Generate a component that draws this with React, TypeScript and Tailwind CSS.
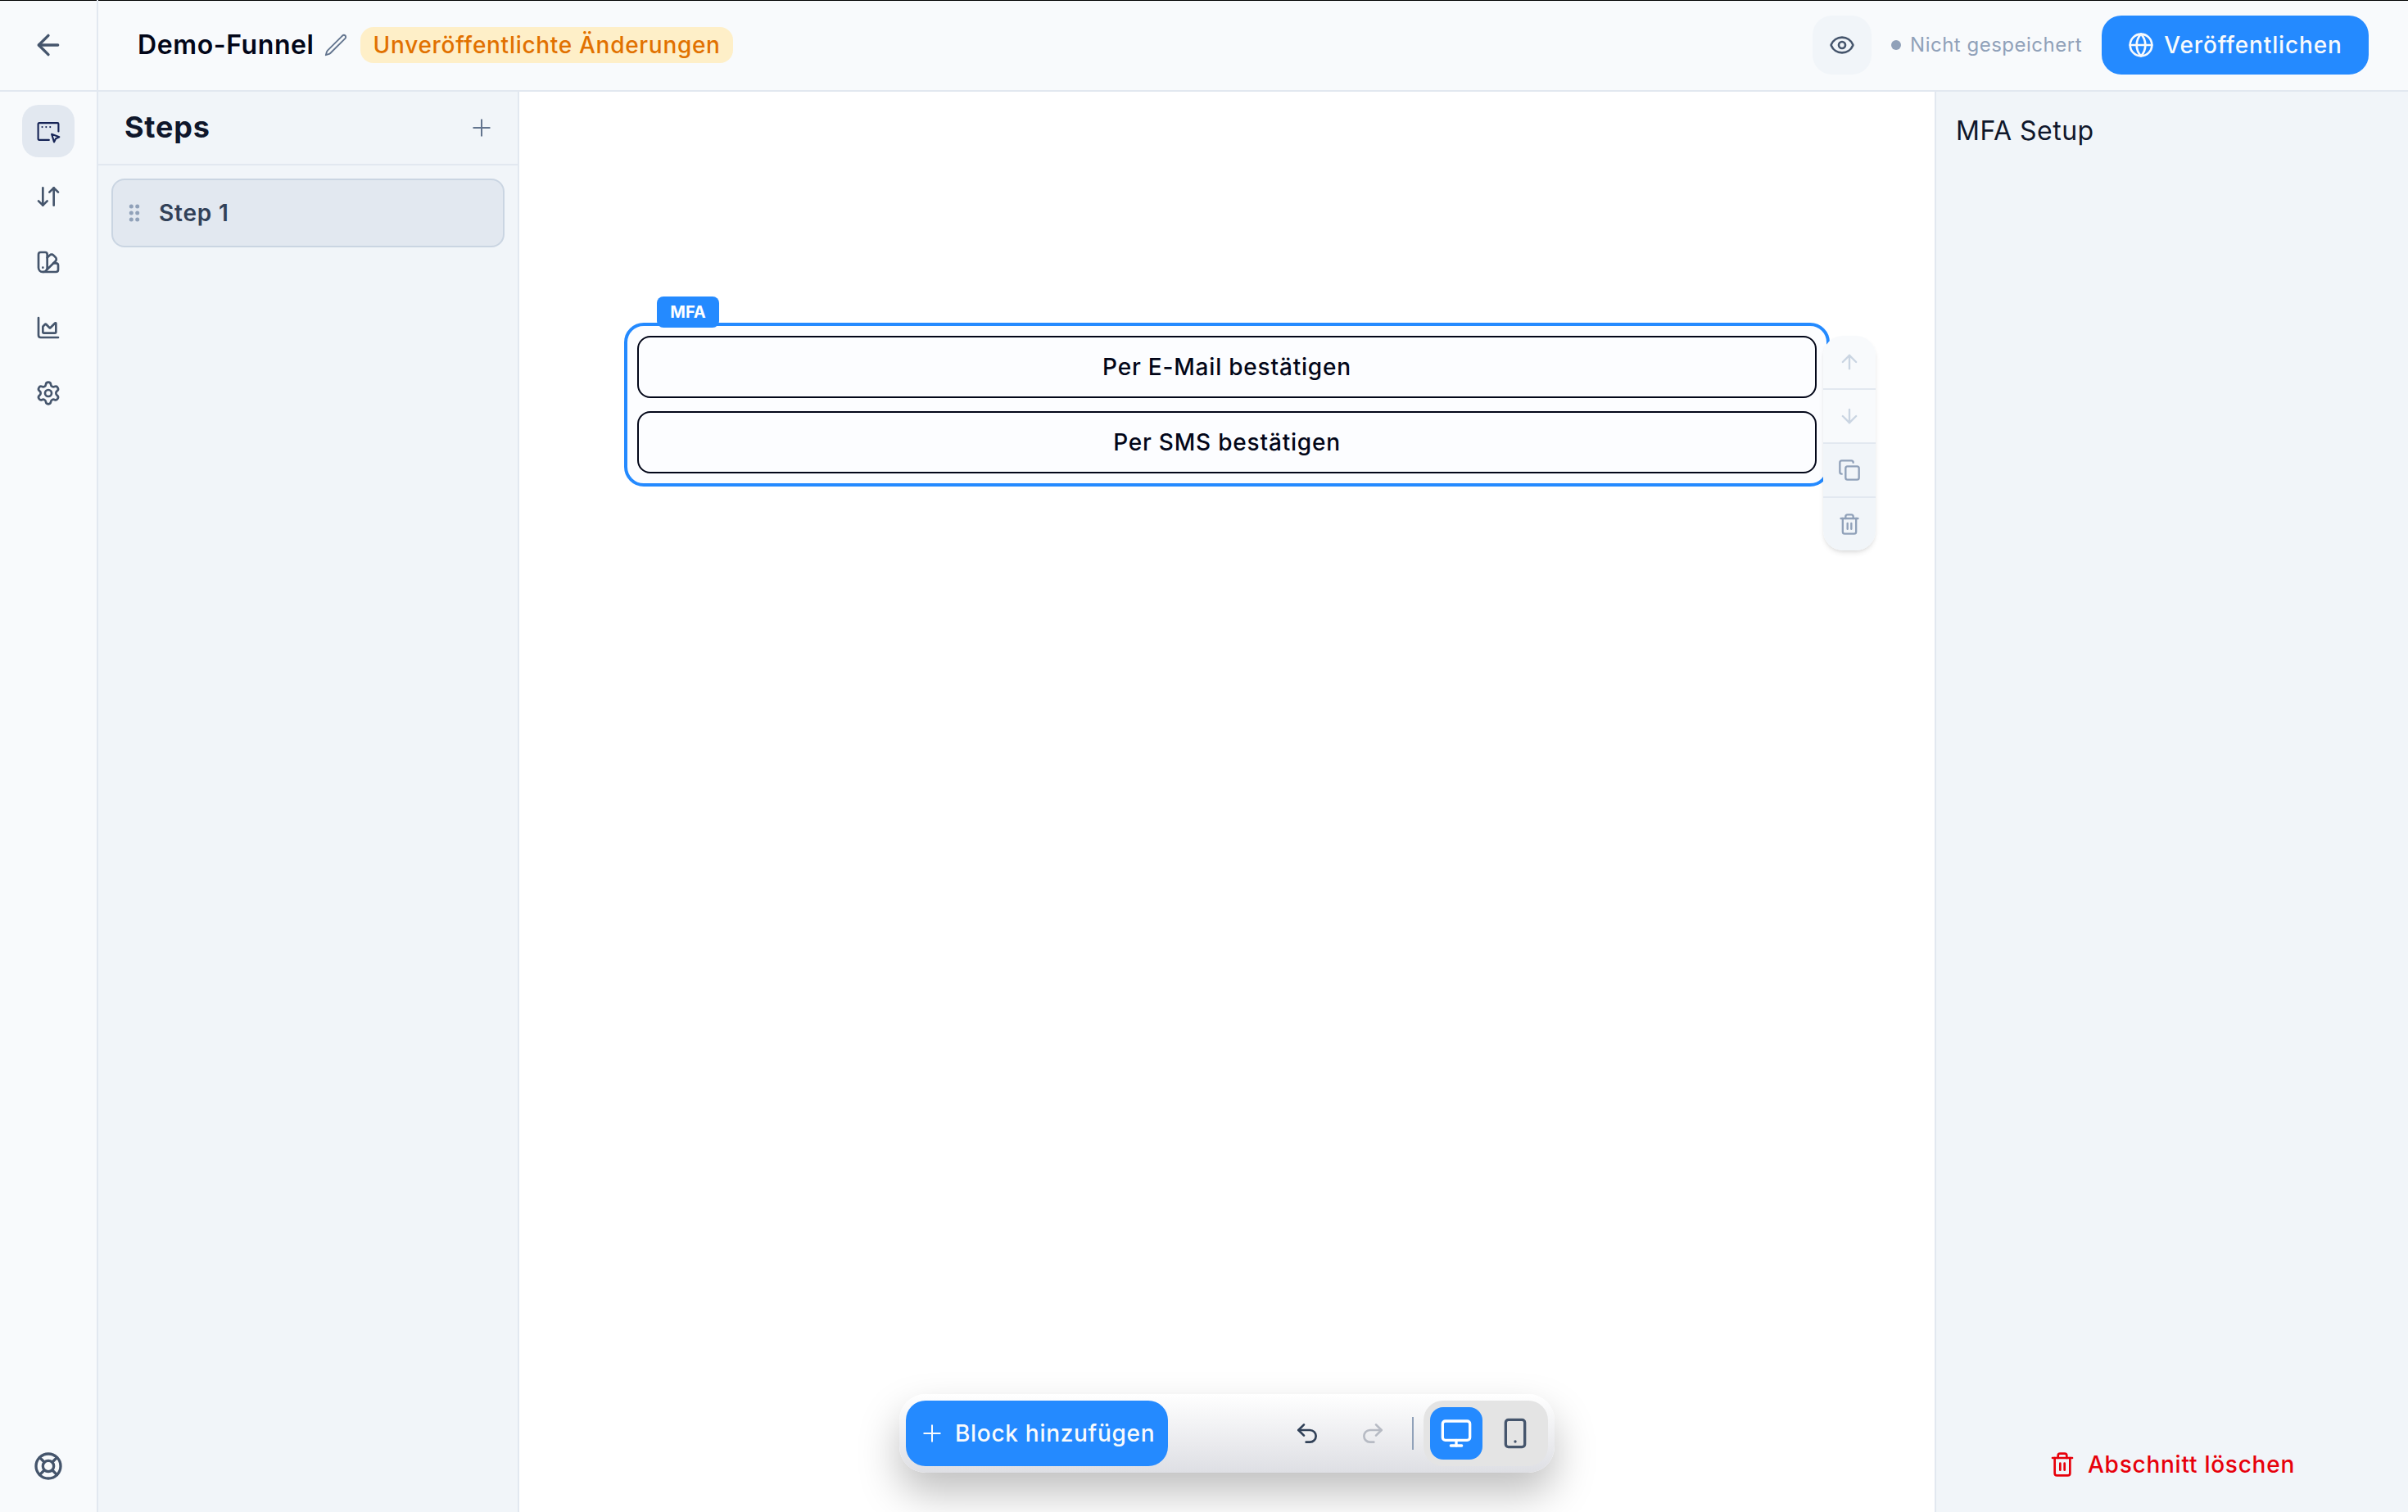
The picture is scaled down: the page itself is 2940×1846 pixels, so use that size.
import React from 'react';
import {
  ArrowDown,
  ArrowDownUp,
  ArrowLeft,
  ArrowUp,
  ChartArea,
  Copy,
  Eye,
  Globe,
  Monitor,
  Redo2,
  Settings,
  Smartphone,
  SwatchBook,
  Trash2,
  Undo2,
} from 'lucide-react';

interface IconProps {
  size?: number;
  stroke?: number;
  className?: string;
  children?: React.ReactNode;
}

const Icon = ({ size = 32, stroke = 1.5, className, children }: IconProps) => (
  <svg
    width={size}
    height={size}
    viewBox="0 0 24 24"
    fill="none"
    stroke="currentColor"
    strokeWidth={stroke}
    strokeLinecap="round"
    strokeLinejoin="round"
    className={className}
  >
    {children}
  </svg>
);

const PlusIcon = ({ className }: { className?: string }) => (
  <Icon className={className}>
    <path d="M12 4.700v14.600M4.700 12h14.600" />
  </Icon>
);

const navItems = [
  {
    name: 'editor',
    icon: (
      <Icon stroke={1.6}>
        <path d="M21.300 12.300V5.500a.9.9 0 0 0-.9-.9H3.600a.9.9 0 0 0-.9.9v13.800a.9.9 0 0 0 .9.900h9" />
        <path d="M6.400 8.300v.01M10 8.300v.01M13.700 8.300v.01" />
        <path d="M15.100 14.900l6.900 2.500-3.200 1.500-1.500 3.100z" />
      </Icon>
    ),
  },
  { name: 'flow', icon: <ArrowDownUp size={32} /> },
  { name: 'design', icon: <SwatchBook size={32} /> },
  { name: 'analytics', icon: <ChartArea size={32} /> },
  { name: 'settings', icon: <Settings size={32} /> },
];

const Rail = () => (
  <nav className="flex w-[120px] shrink-0 flex-col items-center border-r-2 border-slate-200 bg-slate-50 pt-4 pb-6 text-slate-600">
    <div className="flex flex-col gap-4">
      {navItems.map((item, index) => (
        <button
          key={item.name}
          className={
            index === 0
              ? 'flex size-16 items-center justify-center rounded-[20px] bg-slate-200 text-[#162456]'
              : 'flex size-16 items-center justify-center rounded-[20px]'
          }
        >
          {item.icon}
        </button>
      ))}
    </div>
    <button className="mt-auto flex size-16 items-center justify-center">
      <Icon size={40} stroke={2}>
        <circle cx="12" cy="12" r="4" />
        <circle cx="12" cy="12" r="9" />
        <path d="M15 15l3.350 3.350M9 15l-3.350 3.350M5.650 5.650L9 9M18.350 5.650L15 9" />
      </Icon>
    </button>
  </nav>
);

const Header = () => (
  <header className="flex h-[112px] shrink-0 border-b-2 border-slate-200 bg-slate-50 shadow-[inset_0_1px_0_#000]">
    <div className="flex w-[120px] items-center justify-center border-r-2 border-slate-200 text-slate-600">
      <ArrowLeft size={40} />
    </div>
    <div className="flex flex-1 items-center pr-12 pl-12">
      <h1 className="text-[32px] font-semibold tracking-[0.6px] text-slate-950">Demo-Funnel</h1>
      <Icon size={30} className="ml-[11px] text-slate-500">
        <path d="m16.862 4.487 1.687-1.688a1.875 1.875 0 1 1 2.652 2.652L6.832 19.820a4.500 4.500 0 0 1-1.897 1.130l-2.685.8.8-2.685a4.500 4.500 0 0 1 1.130-1.897L16.863 4.487Z" />
      </Icon>
      <span className="ml-[15px] flex h-11 w-[455px] items-center rounded-2xl bg-[#feefc8] pl-4 text-[28px] font-medium tracking-wide whitespace-nowrap text-[#e17100]">
        Unveröffentlichte Änderungen
      </span>
      <div className="ml-auto flex items-center">
        <button className="flex size-[72px] items-center justify-center rounded-3xl bg-slate-100 text-slate-600">
          <Eye size={32} />
        </button>
        <span className="ml-6 size-3 rounded-full bg-slate-400" />
        <span className="ml-[11px] text-2xl tracking-[0.5px] text-slate-400">Nicht gespeichert</span>
        <button className="ml-6 flex h-[72px] w-[326px] items-center justify-center gap-3 rounded-3xl bg-[#248aff] text-[28px] font-medium tracking-[0.85px] text-slate-50">
          <Globe size={32} />
          Veröffentlichen
        </button>
      </div>
    </div>
  </header>
);

const StepsPanel = () => (
  <aside className="flex w-[514px] shrink-0 flex-col border-r-2 border-slate-200 bg-slate-100">
    <div className="flex h-[90px] items-center justify-between border-b-2 border-slate-200 pr-7 pl-8">
      <h2 className="pb-0.5 text-4xl font-bold tracking-[0.8px] text-slate-900">Steps</h2>
      <PlusIcon className="text-slate-500" />
    </div>
    <div className="p-4">
      <div className="flex h-[84px] items-center rounded-2xl border-2 border-slate-300 bg-slate-200 pl-[19px]">
        <svg width="14" height="22" viewBox="0 0 14 22" className="fill-slate-400">
          {[3, 11, 19].map((y) => (
            <React.Fragment key={y}>
              <circle cx="3.300" cy={y} r="2.500" />
              <circle cx="10.700" cy={y} r="2.500" />
            </React.Fragment>
          ))}
        </svg>
        <span className="ml-[23px] text-[28px] font-semibold tracking-[0.8px] text-slate-700">Step 1</span>
      </div>
    </div>
  </aside>
);

const BlockActions = () => (
  <div className="absolute top-3 left-[1460px] flex w-16 flex-col overflow-hidden rounded-3xl text-slate-400 shadow-md">
    <div className="flex h-16 items-center justify-center bg-slate-50 text-slate-300">
      <ArrowUp size={28} />
    </div>
    <div className="flex h-[66px] items-center justify-center border-t-2 border-slate-200 bg-slate-50 text-slate-300">
      <ArrowDown size={28} />
    </div>
    <div className="flex h-[66px] items-center justify-center border-t-2 border-slate-200 bg-slate-100">
      <Copy size={28} />
    </div>
    <div className="flex h-[66px] items-center justify-center border-t-2 border-slate-200 bg-slate-100">
      <Trash2 size={28} />
    </div>
  </div>
);

const Toolbar = () => (
  <div className="mb-12 flex h-24 w-[800px] items-center rounded-[32px] bg-linear-to-b from-white to-[#dedfe4] p-2 shadow-[0_25px_50px_0_rgba(0,0,0,0.25)]">
    <button className="flex h-20 w-[320px] items-center rounded-3xl bg-[#248aff] pl-4 text-[28px] font-medium tracking-wide text-slate-50">
      <PlusIcon />
      <span className="ml-3">Block hinzufügen</span>
    </button>
    <div className="ml-auto flex items-center gap-12">
      <Undo2 size={32} className="text-slate-700" />
      <Redo2 size={32} className="text-[#b7bbc4]" />
    </div>
    <span className="ml-8 h-10 w-0.5 bg-slate-400" />
    <div className="ml-3 flex h-20 w-[152px] items-center gap-2 rounded-3xl bg-[#e4e4e4] p-2">
      <div className="flex size-16 items-center justify-center rounded-2xl bg-[#248aff] text-white">
        <Monitor size={40} />
      </div>
      <div className="flex size-16 items-center justify-center text-slate-600">
        <Smartphone size={40} />
      </div>
    </div>
  </div>
);

const Canvas = () => (
  <main className="flex flex-1 flex-col items-center bg-white">
    <div className="relative mt-[282px] flex w-[1472px] flex-col gap-4 rounded-3xl border-4 border-[#248aff] bg-[#fcfdff] p-3">
      {['Per E-Mail bestätigen', 'Per SMS bestätigen'].map((label) => (
        <button
          key={label}
          className="h-[76px] rounded-2xl border-2 border-slate-950 text-[28px] font-medium tracking-[0.8px] text-slate-950"
        >
          {label}
        </button>
      ))}
      <span className="absolute top-[-36px] left-9 flex h-[38px] w-[76px] items-center justify-center rounded-lg bg-[#248aff] text-xl font-bold text-white">
        MFA
      </span>
      <BlockActions />
    </div>
    <div className="mt-auto">
      <Toolbar />
    </div>
  </main>
);

const SetupPanel = () => (
  <aside className="flex w-[578px] shrink-0 flex-col border-l-2 border-slate-200 bg-slate-100 px-6 pt-6">
    <h3 className="text-[32px] tracking-[0.5px] text-slate-900">MFA Setup</h3>
    <button className="mt-auto mb-[37px] flex items-center justify-center text-[28px] font-medium tracking-[0.75px] text-[#e7000b]">
      <Trash2 size={32} />
      <span className="ml-[15px]">Abschnitt löschen</span>
    </button>
  </aside>
);

const App = () => (
  <div className="flex h-[1846px] w-[2940px] flex-col overflow-hidden font-['Inter',sans-serif]">
    <Header />
    <div className="flex min-h-0 flex-1">
      <Rail />
      <StepsPanel />
      <Canvas />
      <SetupPanel />
    </div>
  </div>
);

export default App;
